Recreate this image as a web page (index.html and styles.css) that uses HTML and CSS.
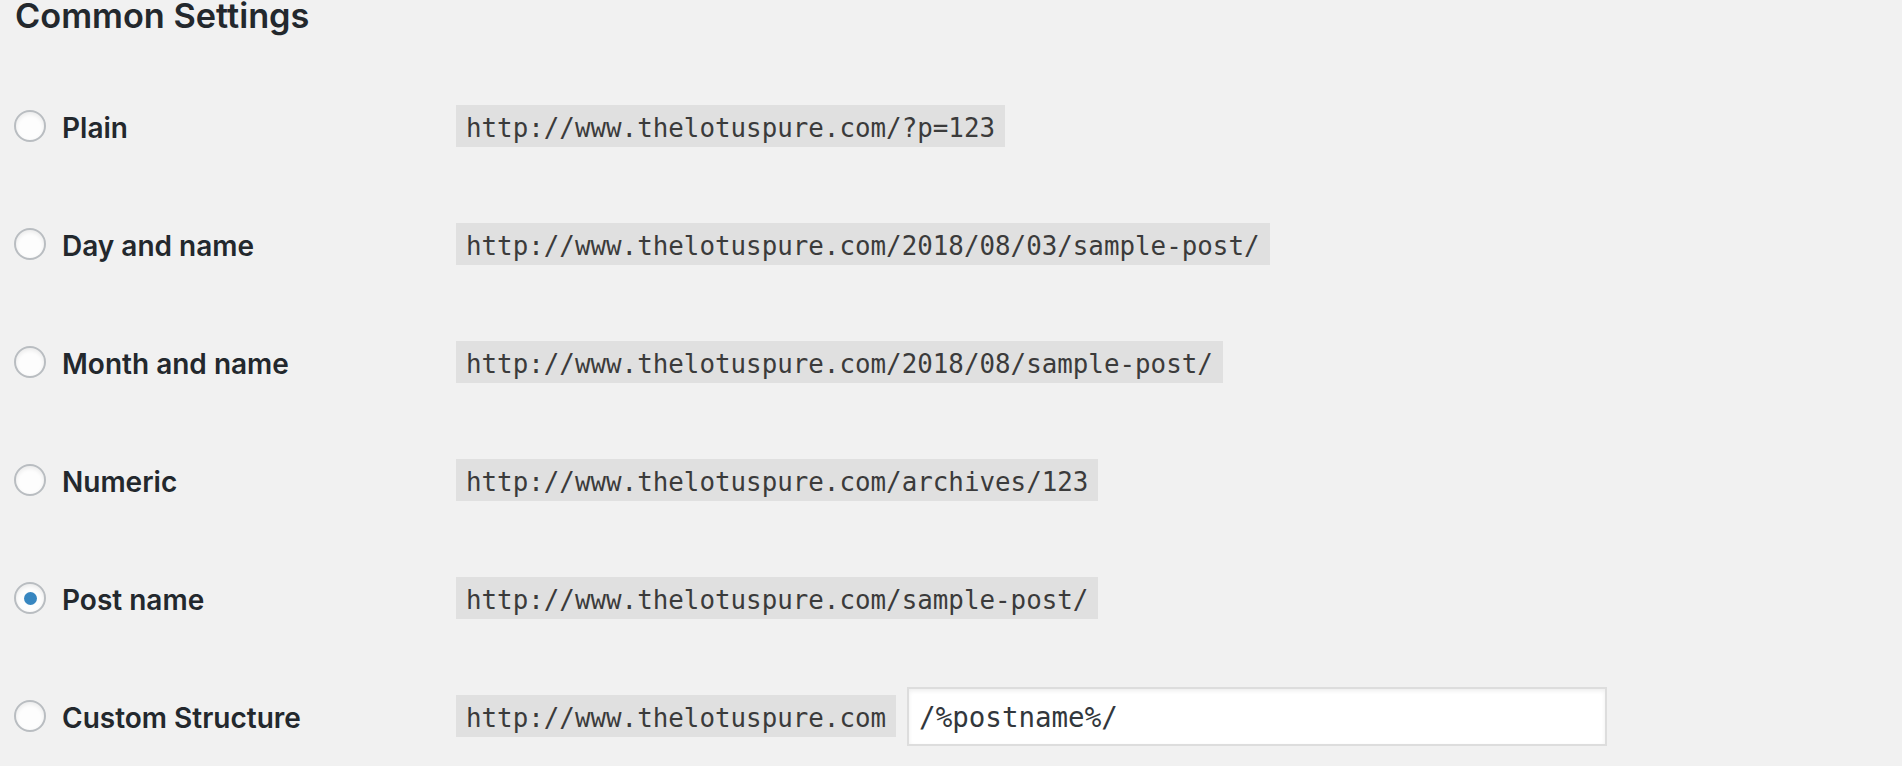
FILE: index.html
```html
<!DOCTYPE html>
<html lang="en">
<head>
<meta charset="utf-8">
<title>Common Settings</title>
<link rel="stylesheet" href="styles.css">
</head>
<body>
<div class="wrap">
  <h2 class="title">Common Settings</h2>
  <div class="options">
    <div class="row">
      <label class="choice"><span class="radio"></span><span class="label-text">Plain</span></label>
      <div class="value"><code class="url">http://www.thelotuspure.com/?p=123</code></div>
    </div>
    <div class="row">
      <label class="choice"><span class="radio"></span><span class="label-text">Day and name</span></label>
      <div class="value"><code class="url">http://www.thelotuspure.com/2018/08/03/sample-post/</code></div>
    </div>
    <div class="row">
      <label class="choice"><span class="radio"></span><span class="label-text">Month and name</span></label>
      <div class="value"><code class="url">http://www.thelotuspure.com/2018/08/sample-post/</code></div>
    </div>
    <div class="row">
      <label class="choice"><span class="radio"></span><span class="label-text">Numeric</span></label>
      <div class="value"><code class="url">http://www.thelotuspure.com/archives/123</code></div>
    </div>
    <div class="row">
      <label class="choice"><span class="radio checked"></span><span class="label-text">Post name</span></label>
      <div class="value"><code class="url">http://www.thelotuspure.com/sample-post/</code></div>
    </div>
    <div class="row">
      <label class="choice"><span class="radio"></span><span class="label-text">Custom Structure</span></label>
      <div class="value">
        <code class="url">http://www.thelotuspure.com</code>
        <input class="structure" type="text" value="/%postname%/">
      </div>
    </div>
  </div>
</div>
</body>
</html>
```

FILE: styles.css
```css
html, body {
  margin: 0;
  padding: 0;
  background: #f1f1f1;
}

body {
  font-family: Inter, "Noto Sans", "Liberation Sans", sans-serif;
  color: #23282d;
}

.wrap {
  padding-left: 14px;
}

.title {
  margin: 0 0 0 1px;
  font-size: 34.3px;
  line-height: 32px;
  font-weight: 600;
  color: #23282d;
}

.options {
  margin-top: 35px;
  display: flex;
  flex-direction: column;
}

.row {
  height: 118px;
  display: flex;
  align-items: center;
}

.choice {
  width: 442px;
  display: flex;
  align-items: center;
  gap: 16px;
  flex-shrink: 0;
}

.radio {
  width: 32px;
  height: 32px;
  box-sizing: border-box;
  border: 2px solid #b9bdc1;
  border-radius: 50%;
  background: #fdfdfd;
  box-shadow: inset 0 2px 4px rgba(0, 0, 0, 0.08);
  display: flex;
  align-items: center;
  justify-content: center;
  flex-shrink: 0;
}

.radio.checked::before {
  content: "";
  width: 13px;
  height: 13px;
  border-radius: 50%;
  background: #3786c0;
}

.label-text {
  font-size: 28px;
  font-weight: 600;
  margin-top: 4px;
  color: #23282d;
}

.value {
  display: flex;
  align-items: center;
  gap: 11px;
}

.url {
  display: inline-block;
  font-family: "DejaVu Sans Mono", "Liberation Mono", monospace;
  font-size: 25.85px;
  line-height: 32px;
  padding: 7px 10px 3px;
  background: #e0e0e0;
  color: #3b3b3b;
  white-space: nowrap;
}

.structure {
  width: 700px;
  height: 59px;
  box-sizing: border-box;
  margin: 0;
  padding: 2px 10px 0;
  border: 2px solid #dddddd;
  background: #ffffff;
  box-shadow: inset 0 2px 4px rgba(0, 0, 0, 0.07);
  font-family: "DejaVu Sans Mono", "Liberation Mono", monospace;
  font-size: 27.5px;
  color: #32373c;
  outline: none;
}
```
